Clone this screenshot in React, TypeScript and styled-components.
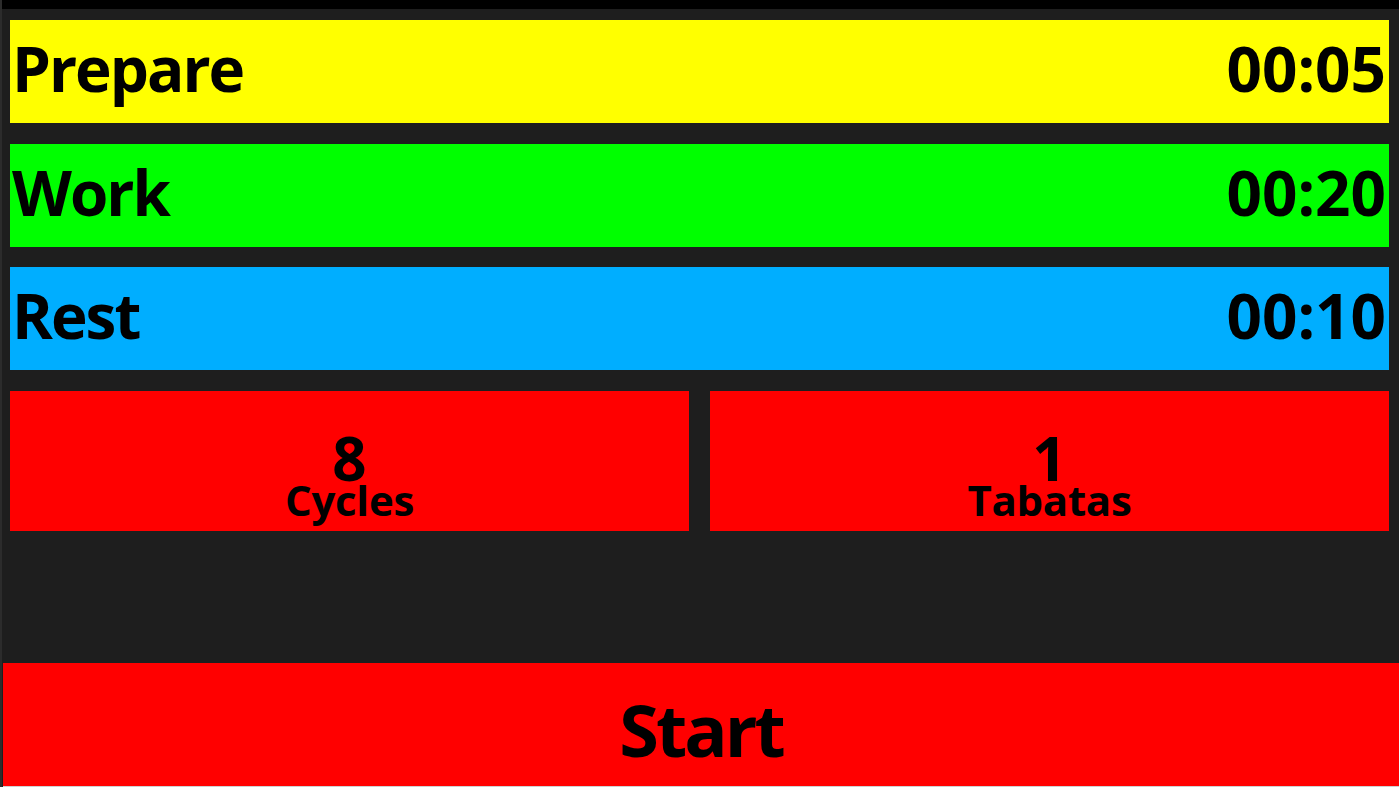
import React from "react";
import styled, { createGlobalStyle } from "styled-components";

const Global = createGlobalStyle`
  html, body { margin: 0; padding: 0; background: #1e1e1e; }
  body { font-family: "Open Sans", "Noto Sans", sans-serif; }
  #root { height: 100vh; }
`;

const Page = styled.div`
  height: 100vh;
  display: flex;
  flex-direction: column;
  background: #1e1e1e;
  border-left: 2px solid #2c2c2c;
  box-sizing: border-box;
  overflow: hidden;
`;

const TopStrip = styled.div`
  height: 9px;
  background: #000;
  flex: none;
`;

const Content = styled.div`
  padding: 11px 10px 0 8px;
  display: flex;
  flex-direction: column;
  gap: 20.5px;
`;

const PhaseRow = styled.div<{ $bg: string }>`
  height: 103px;
  background: ${(p) => p.$bg};
  display: flex;
  align-items: flex-start;
  justify-content: space-between;
  padding: 17px 3px 0 2px;
  box-sizing: border-box;
  color: #000;
  font-weight: 700;
  font-size: 62px;
  line-height: 62px;
`;

const Label = styled.span`
  letter-spacing: -2px;
`;

const Time = styled.span`
  letter-spacing: 0;
`;

const CardRow = styled.div`
  display: grid;
  grid-template-columns: 1fr 1fr;
  gap: 21px;
`;

const Card = styled.div`
  height: 140px;
  background: #ff0000;
  display: flex;
  flex-direction: column;
  align-items: center;
  justify-content: flex-start;
  padding-top: 43px;
  box-sizing: border-box;
  color: #000;
  font-weight: 700;
`;

const CardValue = styled.div`
  font-size: 60px;
  line-height: 48px;
`;

const CardLabel = styled.div`
  font-size: 42px;
  line-height: 36px;
  letter-spacing: -0.3px;
`;

const Spacer = styled.div`
  flex: 1;
`;

const StartButton = styled.button`
  height: 124px;
  flex: none;
  margin-left: 1px;
  border: none;
  border-bottom: 1px solid #d0d0d0;
  background: #ff0000;
  color: #000;
  font-family: inherit;
  font-weight: 700;
  font-size: 72px;
  line-height: 72px;
  letter-spacing: -3px;
  display: flex;
  align-items: flex-start;
  justify-content: center;
  padding: 30px 0 0;
  box-sizing: border-box;
  cursor: pointer;
`;

const phases = [
  { name: "Prepare", time: "00:05", color: "#ffff00" },
  { name: "Work", time: "00:20", color: "#00ff00" },
  { name: "Rest", time: "00:10", color: "#00aeff" },
];

export default function App() {
  return (
    <>
      <Global />
      <Page>
        <TopStrip />
        <Content>
          {phases.map((p) => (
            <PhaseRow key={p.name} $bg={p.color}>
              <Label>{p.name}</Label>
              <Time>{p.time}</Time>
            </PhaseRow>
          ))}
          <CardRow>
            <Card>
              <CardValue>8</CardValue>
              <CardLabel>Cycles</CardLabel>
            </Card>
            <Card>
              <CardValue>1</CardValue>
              <CardLabel>Tabatas</CardLabel>
            </Card>
          </CardRow>
        </Content>
        <Spacer />
        <StartButton>Start</StartButton>
      </Page>
    </>
  );
}
